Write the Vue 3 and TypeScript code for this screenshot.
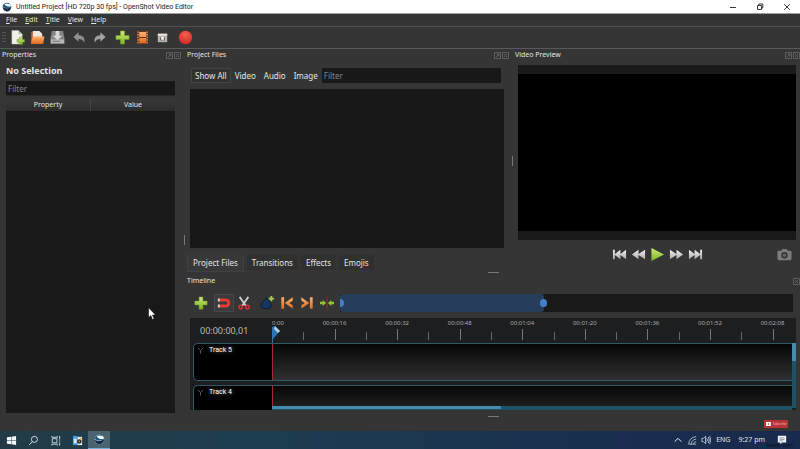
<script setup lang="ts">
import { ref } from 'vue'

const menus: string[] = ['File', 'Edit', 'Title', 'View', 'Help']
const filters: string[] = ['Show All', 'Video', 'Audio', 'Image']
const tabs: string[] = ['Project Files', 'Transitions', 'Effects', 'Emojis']
const marks: string[] = ['0:00', '00:00:16', '00:00:32', '00:00:48', '00:01:04', '00:01:20', '00:01:36', '00:01:52', '00:02:08']
const tracks: string[] = ['Track 5', 'Track 4']

const activeFilter = ref('Show All')
const activeTab = ref('Project Files')
const propertyFilter = ref('')
const fileFilter = ref('')
</script>

<template>
  <div class="app">
    <svg class="defs" width="0" height="0" aria-hidden="true">
      <defs>
        <linearGradient id="green" x1="0" y1="0" x2="0" y2="1"><stop offset="0" stop-color="#d3e77c" /><stop offset="1" stop-color="#79b51f" /></linearGradient>
        <linearGradient id="orange" x1="0" y1="0" x2="0" y2="1"><stop offset="0" stop-color="#ffb070" /><stop offset="1" stop-color="#e06a1c" /></linearGradient>
        <linearGradient id="silver" x1="0" y1="0" x2="0" y2="1"><stop offset="0" stop-color="#f2f2f2" /><stop offset="1" stop-color="#a9a9a9" /></linearGradient>
        <radialGradient id="red" cx=".5" cy=".3" r=".7"><stop offset="0" stop-color="#f5604e" /><stop offset="1" stop-color="#cf2a26" /></radialGradient>
        <symbol id="plus" viewBox="0 0 16 16"><path d="M5.8 1h4.4v4.800H15v4.400h-4.800V15H5.800v-4.800H1V5.800h4.800z" fill="url(#green)" stroke="#6f9c2b" stroke-width=".6" /></symbol>
        <symbol id="float" viewBox="0 0 15 7"><g fill="none" stroke="#686868" stroke-width=".8"><path d="M.5.5h6v6h-6zM8.500.5h6v6h-6zM2 5l3-3M2.500 2H5v2.500M10 2l3 3M13 2l-3 3" /></g></symbol>
        <symbol id="globe" viewBox="0 0 16 16"><circle cx="8" cy="8" r="7" fill="#c5dcec" /><path d="M1 8c4 3 9 3 14-1-.2 5-3.500 8-7 8S1.500 12.500 1 8z" fill="#142c45" /><path d="M1 7C2 2 9-.5 13 3 8 2.500 8 7 15 7c-4 3-10 3.500-14 0z" fill="#245577" /><path d="M4 4c3-3 7-2 10 3-4 1-7 0-10-3z" fill="#f5fbff" /></symbol>
      </defs>
    </svg>

    <header class="titlebar">
      <svg class="logo" viewBox="0 0 16 16"><use href="#globe" /></svg>
      <span class="title">Untitled Project [HD 720p 30 fps] - OpenShot Video Editor</span>
      <div class="window-buttons">
        <button aria-label="Minimize"><svg viewBox="0 0 8 8"><path d="M1 4.500h6" /></svg></button>
        <button aria-label="Restore"><svg viewBox="0 0 8 8"><path d="M1.500 2.500h4v4h-4zM2.800 2.200V1h4v4H5.800" /></svg></button>
        <button aria-label="Close"><svg viewBox="0 0 8 8"><path d="M1.200 1.200l5.600 5.600M6.800 1.200L1.200 6.800" /></svg></button>
      </div>
    </header>

    <nav class="menubar">
      <button v-for="m in menus" :key="m"><u>{{ m.charAt(0) }}</u>{{ m.slice(1) }}</button>
    </nav>

    <div class="toolbar">
      <span class="grip"></span>
      <div class="group">
        <button aria-label="New project"><svg viewBox="0 0 16 16"><path d="M2 .5h7l4 4V15H2z" fill="#f1f1e9" stroke="#b9b9b4" stroke-width=".5" /><path d="M9 .5v4h4z" fill="#b8bab4" /><path d="M10 7.500h3V10h2.500v3H13v2.500h-3V13H7.500v-3H10z" fill="url(#green)" stroke="#658a2b" stroke-width=".5" /></svg></button>
        <button aria-label="Open project"><svg viewBox="0 0 16 16"><path d="M1 2h5l1 2h4v10H1z" fill="#bd541d" /><path d="M3 1h7l3 3v8H3z" fill="#efe6dd" /><path d="M1 14L3 7h12.500L14 15H1z" fill="url(#orange)" /></svg></button>
        <button aria-label="Save project"><svg viewBox="0 0 16 16"><path d="M2 1h12l1.500 8v6H.5V9z" fill="#858585" /><path d="M1 10h14v4H1z" fill="#b6b6b6" /><path d="M6 1h4v5h3l-5 5-5-5h3z" fill="#d7d7d7" /><path d="M3 12h8" stroke="#777" /></svg></button>
      </div>
      <div class="group">
        <button aria-label="Undo"><svg viewBox="0 0 16 16"><path d="M7 2.500v3c5 0 7 3 6 8-1-3-3-4-6-4v3L1.500 7.500z" fill="#8e9296" /></svg></button>
        <button aria-label="Redo"><svg viewBox="0 0 16 16"><path d="M9 2.500v3c-5 0-7 3-6 8 1-3 3-4 6-4v3l5.500-5z" fill="#a0a3a6" /></svg></button>
      </div>
      <div class="group">
        <button aria-label="Import files"><svg viewBox="0 0 16 16"><use href="#plus" /></svg></button>
        <button aria-label="Choose profile"><svg viewBox="0 0 16 16"><path d="M2 1h12v14H2z" fill="#64351c" /><path d="M4.500 2h7.500v5.500H4.500zM4.500 8.500h7.500V14H4.500z" fill="url(#orange)" /><path d="M3.200 1.500v13M13 1.500v13" stroke="#d7a785" stroke-width="1.300" stroke-dasharray="1.500 1.300" /></svg></button>
        <button aria-label="Fullscreen"><svg viewBox="0 0 16 16"><path d="M3 4h10v9H3z" fill="#b8b1ae" /><path d="M3 4h10v2H3z" fill="#ede9e3" /><path d="M5.500 8h5v3h-5z" fill="#684b46" /><path d="M6.500 7.500h3v3h-3z" fill="#eee" /></svg></button>
      </div>
      <div class="group">
        <button aria-label="Export video"><svg viewBox="0 0 16 16"><circle cx="8" cy="8" r="7.200" fill="url(#red)" /></svg></button>
      </div>
    </div>

    <main class="workspace">
      <section class="dock properties">
        <div class="dock-head"><h2>Properties</h2><button aria-label="Float or close Properties"><svg viewBox="0 0 15 7"><use href="#float" /></svg></button></div>
        <h1>No Selection</h1>
        <input v-model="propertyFilter" class="field" aria-label="Filter properties" placeholder="Filter" />
        <div class="property-table">
          <table><thead><tr><th>Property</th><th>Value</th></tr></thead></table>
        </div>
      </section>
      <div class="splitter"><i></i></div>

      <div class="right-area">
        <div class="upper">
          <section class="dock files">
            <div class="dock-head"><h2>Project Files</h2><button aria-label="Float or close Project Files"><svg viewBox="0 0 15 7"><use href="#float" /></svg></button></div>
            <div class="filter-row">
              <button v-for="f in filters" :key="f" :class="{ on: activeFilter === f }" @click="activeFilter = f">{{ f }}</button>
              <input v-model="fileFilter" class="field" aria-label="Filter files" placeholder="Filter" />
            </div>
            <div class="file-list"></div>
            <div class="tabs" role="tablist">
              <button v-for="t in tabs" :key="t" role="tab" :aria-selected="activeTab === t" :class="{ on: activeTab === t }" @click="activeTab = t">{{ t }}</button>
            </div>
          </section>
          <div class="splitter middle"><i></i></div>
          <section class="dock preview">
            <div class="dock-head"><h2>Video Preview</h2><button aria-label="Float or close Video Preview"><svg viewBox="0 0 15 7"><use href="#float" /></svg></button></div>
            <div class="video"><div class="screen"></div></div>
            <div class="transport">
              <span></span>
              <div class="players">
                <button aria-label="Jump to start"><svg viewBox="0 0 16 16"><path d="M1 3h2v4.500L9 3v4.500L15 3v10L9 8.500V13L3 8.500V13H1z" fill="url(#silver)" /></svg></button>
                <button aria-label="Rewind"><svg viewBox="0 0 16 16"><path d="M8 3v4.500L15 3v10L8 8.500V13L1 8z" fill="url(#silver)" /></svg></button>
                <button aria-label="Play"><svg viewBox="0 0 16 16"><path d="M1.500 1L15 8 1.500 15z" fill="url(#green)" /></svg></button>
                <button aria-label="Fast forward"><svg viewBox="0 0 16 16"><path d="M8 3v4.500L1 3v10l7-4.500V13l7-5z" fill="url(#silver)" /></svg></button>
                <button aria-label="Jump to end"><svg viewBox="0 0 16 16"><path d="M15 3h-2v4.500L7 3v4.500L1 3v10l6-4.500V13l6-4.500V13h2z" fill="url(#silver)" /></svg></button>
              </div>
              <button class="camera" aria-label="Save frame"><svg viewBox="0 0 16 16"><path fill-rule="evenodd" d="M2 4h2.500L6 2h4l1.500 2H14q1.500 0 1.500 1.500v7Q15.500 14 14 14H2Q.5 14 .5 12.500v-7Q.5 4 2 4zM8 5.300a3.500 3.500 0 100 7 3.500 3.500 0 000-7z" fill="#7c7c7c" /><circle cx="8" cy="8.800" r="1.900" fill="#666" /></svg></button>
            </div>
          </section>
        </div>
        <div class="row-splitter"><i></i></div>

        <section class="dock timeline">
          <div class="dock-head"><h2>Timeline</h2><button class="edge" aria-label="Close Timeline"><svg viewBox="0 0 7 7"><path d="M.5.5h6v6h-6zM2 2l3 3M5 2L2 5" fill="none" stroke="#686868" stroke-width=".8" /></svg></button></div>
          <div class="timeline-tools">
            <div class="group">
              <button aria-label="Add track"><svg viewBox="0 0 16 16"><use href="#plus" /></svg></button>
            </div>
            <div class="group">
              <button class="on" aria-label="Snapping"><svg viewBox="0 0 16 16"><path d="M2 4.500h8a3.500 3.500 0 010 7H2" fill="none" stroke="#e43b32" stroke-width="3.400" /><path d="M1 2.800h2v3.400H1zM1 9.800h2v3.400H1z" fill="#ddd" /></svg></button>
              <button aria-label="Razor"><svg viewBox="0 0 16 16"><path d="M3 1l7 10M13 1L6 11" stroke="#c8cbd0" stroke-width="2" /><g fill="none" stroke="#d72f33" stroke-width="1.800"><circle cx="4" cy="12.500" r="2" /><circle cx="12" cy="12.500" r="2" /></g></svg></button>
            </div>
            <div class="group">
              <button aria-label="Add marker"><svg viewBox="0 0 16 16"><path d="M7 2c1 3 6 5 6 9 0 2-2 3.500-6 3.500S1 13 1 11c0-4 5-6 6-9z" fill="#14365f" stroke="#08192e" /><path d="M12 0h2v2h2v2h-2v2h-2V4h-2V2h2z" fill="#a6d248" /></svg></button>
              <button aria-label="Previous marker"><svg viewBox="0 0 16 16"><path d="M1.500 1.500h3.200v13H1.500zM14.500 1.500v4L10.500 8l4 2.500v4L5.500 8z" fill="url(#orange)" /></svg></button>
              <button aria-label="Next marker"><svg viewBox="0 0 16 16"><path d="M11.300 1.500h3.200v13h-3.200zM1.500 1.500v4L5.500 8l-4 2.500v4l9-6.500z" fill="url(#orange)" /></svg></button>
              <button aria-label="Center on playhead"><svg viewBox="0 0 16 16"><path d="M8 1v14" stroke="#a02323" stroke-width="1.500" /><path d="M0 6.500h3v-2L7 8l-4 3.500v-2H0zM16 6.500h-3v-2L9 8l4 3.500v-2h3z" fill="#8fc43b" /></svg></button>
            </div>
            <div class="zoom"><div class="zoom-range"><i></i><i></i></div></div>
          </div>

          <div class="canvas">
            <div class="time-row">
              <div class="timecode">00:00:00,01</div>
              <div class="ruler">
                <div v-for="m in marks" :key="m" class="mark"><span>{{ m }}</span><i></i><i></i></div>
                <svg class="playhead" viewBox="0 0 8 18"><path d="M0 2l3-1 5 5-7 8v4H0z" fill="#2a75b8" /><path d="M3 1l5 5-2 2-4-4z" fill="#b4cbdc" /></svg>
              </div>
            </div>
            <div class="track-area">
              <div class="tracks">
                <div v-for="t in tracks" :key="t" class="track">
                  <div class="track-name"><svg viewBox="0 0 8 8"><path d="M1 1l3 3 3-3M4 4v3.500" fill="none" stroke="#62696b" /></svg><span>{{ t }}</span></div>
                  <div class="lane"></div>
                </div>
                <div class="h-scroll"><i></i></div>
              </div>
              <div class="v-scroll"><i></i></div>
            </div>
          </div>
          <div class="row-splitter bottom"><i></i></div>
        </section>
      </div>
    </main>

    <footer class="taskbar">
      <div class="launchers">
        <button aria-label="Start"><svg viewBox="0 0 12 12"><path d="M1 2.500L5.500 2v3.700H1zM6 1.900l5-.7v4.500H6zM1 6.300h4.500V10L1 9.500zM6 6.300h5v4.500l-5-.7z" fill="#f1f6f8" /></svg></button>
        <button aria-label="Search"><svg viewBox="0 0 12 12"><circle cx="7" cy="4.800" r="3.300" fill="none" stroke="#dbe4e7" /><path d="M4.700 7.200L1.200 11" stroke="#dbe4e7" /></svg></button>
        <button aria-label="Task view"><svg viewBox="0 0 12 12"><path d="M2.500 4h5v4.500h-5zM2 1v1.500h6V1M2 11.500V10h6v1.500M10.500 1v4M10.500 8v3.500M9.800 6.500h1.400" fill="none" stroke="#cbd8dd" /></svg></button>
        <button aria-label="Capture tool"><svg viewBox="0 0 12 12"><path d="M1 1h5v10H1z" fill="#4398dc" /><path d="M6 2h5v9H6z" fill="#eef2f5" /><path d="M2 4h3v5H2z" fill="#d9ebf5" /><circle cx="8" cy="7" r="2.500" fill="#222c32" /><path d="M7 3h4v2z" fill="#f0a23d" /><circle cx="8" cy="7" r="1" fill="#e86d45" /></svg></button>
        <button class="running" aria-label="OpenShot"><svg viewBox="0 0 16 16"><use href="#globe" /></svg></button>
      </div>
      <div class="tray">
        <svg viewBox="0 0 12 12"><path d="M2 8l4-4 4 4" fill="none" stroke="#eef3f8" stroke-width="1.200" /></svg>
        <svg viewBox="0 0 12 12"><path d="M2 11A9 9 0 0111 2M5 11a6 6 0 016-6M8 11a3 3 0 013-3M2 11h9" fill="none" stroke="#bac8d6" /></svg>
        <svg viewBox="0 0 12 12"><path d="M1 4h2l2.500-2.500v9L3 8H1zM7 4q1.500 2 0 4M8.700 2.500q2.500 3.500 0 7M10.300 1q3 5 0 10" fill="none" stroke="#dce5ed" stroke-width=".9" /></svg>
        <span>ENG</span>
        <time>9:27 pm</time>
        <div class="notice"><svg viewBox="0 0 12 12"><path d="M1 1h10v8H6l-2 2.500V9H1z" fill="#eef2f7" /><path d="M3 3.500h6M3 5.300h6M3 7h4" stroke="#52647d" stroke-width=".7" /></svg><small>wsxdn.com</small></div>
      </div>
    </footer>

    <a class="subscribe" href="#subscribe"><svg viewBox="0 0 6 5"><path d="M0 0h6v5H0z" fill="#fff" /><path d="M2.300 1.200v2.600l2-1.300z" fill="#d33" /></svg>Subscribe</a>
    <svg class="cursor" viewBox="0 0 8 13"><path d="M.5.5v10l2.300-2 1.600 4 1.700-.8-1.600-3.700h3z" fill="#fff" stroke="#111" stroke-width=".6" /></svg>
  </div>
</template>

<style>
body { margin: 0; background: #353535; }
</style>

<style scoped>
* { box-sizing: border-box; }
.app { position: relative; display: flex; flex-direction: column; min-height: 100vh; overflow: hidden; background: #353535; color: #e4e4e4; font-family: "Noto Sans", "Open Sans", sans-serif; font-size: 7px; line-height: 10px; }
.defs { position: absolute; }
button { padding: 0; border: 0; background: none; color: inherit; font: inherit; display: flex; align-items: center; justify-content: center; }
svg { display: block; flex: none; }
h1, h2 { margin: 0; font-size: 7px; font-weight: 400; }

.titlebar { display: flex; align-items: center; height: 14px; padding-left: 2px; background: #fff; color: #222; border-bottom: 1px solid #a0a0a0; font-family: Roboto, sans-serif; }
.logo { width: 10px; height: 10px; margin-right: 4px; }
.window-buttons { display: flex; margin-left: auto; }
.window-buttons button { width: 27px; height: 13px; }
.window-buttons svg { width: 8px; height: 8px; fill: none; stroke: #222; stroke-width: .9; }

.menubar { display: flex; align-items: center; gap: 8px; height: 13px; padding-left: 6px; border-bottom: 1px solid #505050; }
.menubar u { text-underline-offset: 1px; text-decoration-thickness: 1px; }
.toolbar { display: flex; align-items: center; gap: 3px; height: 22px; border-bottom: 1px solid #595959; }
.grip { width: 4px; height: 12px; margin-left: 2px; margin-right: -2px; background: repeating-linear-gradient(#555 0 1px, transparent 1px 3px); }
.toolbar .grip + .group { margin-right: -1px; }
.group { display: flex; }
.group button { width: 20px; height: 18px; }
.group svg { width: 15px; height: 15px; }

.workspace { display: flex; flex: 1; }
.dock { display: flex; flex-direction: column; min-width: 0; }
.dock-head { display: flex; align-items: center; justify-content: space-between; height: 12px; }
.dock-head svg { width: 15px; height: 7px; }
.dock-head .edge svg { width: 7px; }
.properties { width: 181px; padding-bottom: 18px; }
.properties .dock-head { padding-left: 2px; }
.properties h1 { padding: 4px 6px; font-size: 9px; font-weight: 700; line-height: 12px; }
.field { min-width: 0; height: 15px; padding: 0 2px; border: 0; border-radius: 1px; background: #181818; color: #ddd; font: inherit; font-size: 8px; outline-color: #456; }
.field::placeholder { color: #858585; opacity: 1; }
.properties .field { margin: 0 6px 3px; border-bottom: 1px solid #282828; }
.property-table { flex: 1; margin: 0 6px; background: #191919; }
table { width: 100%; border-collapse: collapse; table-layout: fixed; }
th { height: 12px; padding: 0; background: linear-gradient(#393939, #2c2c2c); font-weight: 400; }
th + th { border-left: 1px solid #444; }
.splitter { width: 6px; display: flex; align-items: center; justify-content: center; }
.splitter i { width: 1px; height: 10px; background: #777; }
.right-area { display: flex; flex: 1; flex-direction: column; min-width: 0; }
.upper { display: flex; flex: 1; }
.files { flex: 322; }
.preview { flex: 285; }
.middle { width: 6px; }
.filter-row { display: flex; align-items: center; height: 15px; margin: 7px 8px 6px 4px; font-size: 8px; }
.filter-row button { height: 15px; padding: 0 3px; border: 1px solid transparent; }
.filter-row button.on { background: #303232; border-color: #444; }
.filter-row .field { flex: 1; }
.file-list { flex: 1; margin: 0 5px 0 3px; background: #181818; }
.tabs { display: flex; align-items: flex-start; gap: 3px; height: 24px; padding: 7px 0 0 0; font-size: 8px; }
.tabs button { height: 15px; padding: 0 5px; background: #303030; }
.tabs button.on { height: 17px; background: #383838; border: 1px solid #414141; border-top: 0; }
.video { display: flex; flex: 1; margin: 4px 4px 0 3px; padding: 9px 0; background: #191919; }
.screen { flex: 1; background: #000; }
.transport { display: grid; grid-template-columns: 1fr auto 1fr; align-items: center; height: 32px; padding: 0 8px 4px; }
.players { display: flex; }
.players button { width: 19px; height: 20px; }
.players svg, .camera svg { width: 15px; height: 15px; }
.camera { justify-self: end; }
.row-splitter { display: flex; justify-content: center; height: 3px; }
.row-splitter i { width: 11px; height: 1px; background: #777; }

.timeline-tools { display: flex; gap: 3px; height: 18px; margin: 7px 7px 6px 4px; }
.timeline-tools .group .on { background: #3b3b3b; border: 1px solid #474747; }
.timeline-tools .group svg { width: 14px; height: 14px; }
.zoom { flex: 1; background: #191919; }
.zoom-range { display: flex; align-items: center; justify-content: space-between; width: 45%; height: 18px; background: #263d5b; border-radius: 3px; }
.zoom-range i { width: 7px; height: 8px; margin-right: -3px; background: #3f80c6; border-radius: 4px; }
.zoom-range i:first-child { width: 4px; margin-right: 0; border-radius: 0 4px 4px 0; }
.canvas { margin: 0 4px 0 3px; background: #1c1e20; }
.time-row { display: flex; height: 25px; }
.timecode { width: 82px; padding: 7px 0 0 10px; color: #bbb; font-size: 9px; line-height: 12px; }
.ruler { position: relative; display: grid; grid-template-columns: repeat(8, 8fr) 3fr; flex: 1; min-width: 0; }
.mark { display: grid; grid-template-columns: 1fr 1fr; grid-template-rows: 11px 11px; min-width: 0; color: #aaa; font-size: 6px; line-height: 11px; }
.mark span { grid-column: 1 / 3; display: flex; justify-content: center; width: 0; white-space: nowrap; }
.mark:first-child span { justify-content: flex-start; }
.mark i { align-self: end; width: 1px; height: 11px; background: #777; }
.mark i:last-child { height: 8px; background: #666; }
.mark:last-of-type i:last-child { display: none; }
.playhead { position: absolute; left: 0; top: 7px; width: 8px; height: 18px; }
.track-area { display: flex; height: 67px; }
.tracks { position: relative; flex: 1; padding-left: 3px; overflow: hidden; }
.track { display: flex; height: 38px; margin-bottom: 4px; border: 1px solid #315966; border-right: 0; border-radius: 5px 0 0 5px; background: #000; overflow: hidden; }
.track-name { display: flex; align-items: flex-start; gap: 5px; width: 79px; padding: 1px 3px; border-right: 1px solid #a82835; font-family: Roboto, sans-serif; }
.track-name svg { width: 7px; height: 7px; margin-top: 2px; }
.track-name span { color: #fff; text-shadow: 0 0 4px #999; }
.lane { flex: 1; background: linear-gradient(#070707, #303032); }
.h-scroll { position: absolute; left: 82px; right: 0; bottom: 0; height: 4px; background: #1e5267; }
.h-scroll i { display: block; width: 44%; height: 3px; background: #448baf; }
.v-scroll { width: 4px; margin-bottom: 2px; background: #1e5267; }
.v-scroll i { display: block; height: 18px; background: #448baf; }
.bottom { height: 21px; padding-top: 6px; }

.taskbar { display: flex; justify-content: space-between; height: 18px; background: linear-gradient(90deg, #223b46, #1d3e50 30%, #1a304f 70%, #182a4d); }
.launchers { display: flex; }
.launchers button { width: 22px; height: 18px; }
.launchers svg { width: 11px; height: 11px; }
.launchers .running { background: #4a6370; border-bottom: 1px solid #71add5; }
.tray { display: flex; align-items: center; gap: 4px; padding-right: 13px; font-family: "Noto Sans", sans-serif; }
.tray svg { width: 10px; height: 10px; }
.tray span { margin-left: 1px; }
.tray time { margin: 0 8px 0 4px; }
.notice { position: relative; }
.notice small { position: absolute; right: -6px; bottom: -3px; color: #080d18; font-size: 5px; line-height: 6px; }
.subscribe { position: absolute; right: 12px; bottom: 21px; display: flex; align-items: center; gap: 2px; width: 24px; height: 8px; padding: 0 2px; border-radius: 1px; background: #b83438; color: #f0bcbc; font-size: 3px; line-height: 8px; text-decoration: none; }
.subscribe svg { width: 5px; height: 4px; }
.cursor { position: absolute; left: 148px; top: 307px; width: 8px; height: 13px; }
</style>
